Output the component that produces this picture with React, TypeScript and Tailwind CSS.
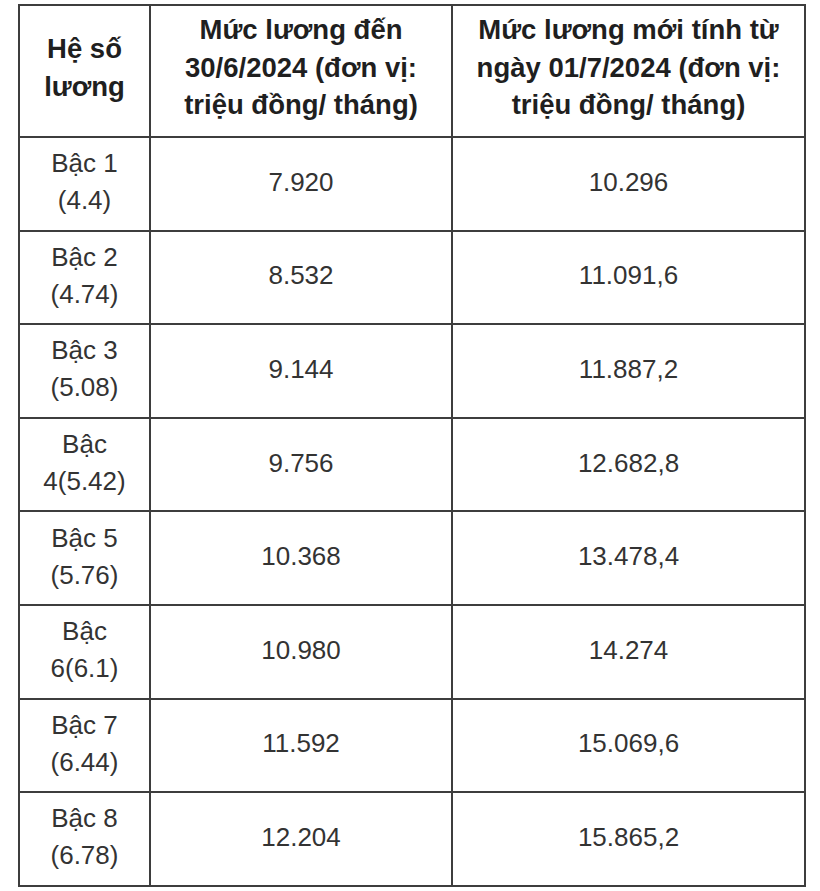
const rows = [
  { grade: ["Bậc 1", "(4.4)"], before: "7.920", after: "10.296" },
  { grade: ["Bậc 2", "(4.74)"], before: "8.532", after: "11.091,6" },
  { grade: ["Bậc 3", "(5.08)"], before: "9.144", after: "11.887,2" },
  { grade: ["Bậc", "4(5.42)"], before: "9.756", after: "12.682,8" },
  { grade: ["Bậc 5", "(5.76)"], before: "10.368", after: "13.478,4" },
  { grade: ["Bậc", "6(6.1)"], before: "10.980", after: "14.274" },
  { grade: ["Bậc 7", "(6.44)"], before: "11.592", after: "15.069,6" },
  { grade: ["Bậc 8", "(6.78)"], before: "12.204", after: "15.865,2" },
];

export default function App() {
  return (
    <main className="min-h-[891px] w-[820px] bg-white pl-[18px] pt-[4px] font-['Liberation_Sans',Arial,sans-serif]">
      <table className="w-[786px] table-fixed border-collapse border-2 border-[#3d3d3d] text-center text-[26px] leading-[37px] text-[#333]">
        <colgroup>
          <col className="w-[131px]" />
          <col className="w-[302px]" />
          <col className="w-[353px]" />
        </colgroup>
        <thead>
          <tr className="h-[132px] text-[27.5px] leading-[37.5px] font-bold text-[#1f1f1f]">
            <th className="border-2 border-[#3d3d3d] px-1 pb-[7px]">
              Hệ số
              <br />
              lương
            </th>
            <th className="border-2 border-[#3d3d3d] px-1 pb-[7px]">
              Mức lương đến
              <br />
              30/6/2024 (đơn vị:
              <br />
              triệu đồng/ tháng)
            </th>
            <th className="border-2 border-[#3d3d3d] px-1 pb-[7px]">
              Mức lương mới tính từ
              <br />
              ngày 01/7/2024 (đơn vị:
              <br />
              triệu đồng/ tháng)
            </th>
          </tr>
        </thead>
        <tbody>
          {rows.map((r) => (
            <tr key={r.before} className="h-[93.6px]">
              <td className="border-2 border-[#3d3d3d] px-2 pb-[3px]">
                {r.grade[0]}
                <br />
                {r.grade[1]}
              </td>
              <td className="border-2 border-[#3d3d3d] px-2 pb-[3px]">{r.before}</td>
              <td className="border-2 border-[#3d3d3d] px-2 pb-[3px]">{r.after}</td>
            </tr>
          ))}
        </tbody>
      </table>
    </main>
  );
}
